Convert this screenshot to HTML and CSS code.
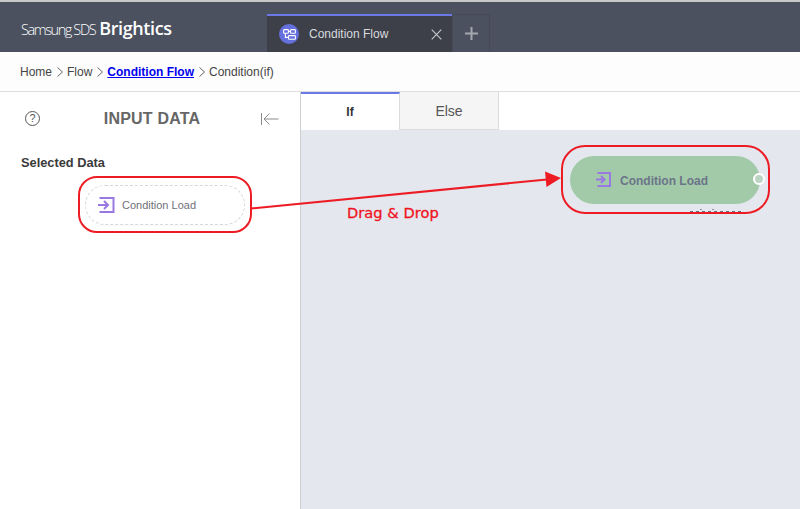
FILE: index.html
```html
<!DOCTYPE html>
<html lang="en">
<head>
<meta charset="utf-8">
<title>Condition Flow</title>
<link rel="stylesheet" href="styles.css">
</head>
<body>
<div class="page">
  <header class="topbar">
    <div class="logo"><span class="logo-sds">Samsung SDS</span><span class="logo-name">Brightics</span></div>
    <div class="tabs">
      <div class="tab">
        <span class="tab-icon">
          <svg width="13" height="11" viewBox="0 0 13 11" fill="none" stroke="#fff" stroke-width="1.1"><rect x=".6" y=".6" width="4.800" height="3.600" rx=".7"/><rect x="7.500" y=".6" width="4.900" height="3.600" rx=".7"/><rect x="5.500" y="6.600" width="6.900" height="3.600" rx=".7"/><path d="M5.400 2.400H7.500M2.400 4.200V8.400H5.500"/></svg>
        </span>
        <span class="tab-title">Condition Flow</span>
        <svg class="tab-close" width="11" height="11" viewBox="0 0 11 11" stroke="#c3c5ca" stroke-width="1.2"><path d="M.7.7 10.300 10.300M10.300.7.7 10.300"/></svg>
      </div>
      <div class="tab-add">
        <svg width="13" height="13" viewBox="0 0 13 13" stroke="#a5a8b0" stroke-width="2"><path d="M6.500 0V13M0 6.500H13"/></svg>
      </div>
    </div>
  </header>
  <nav class="crumbs">
    <span>Home</span>
    <svg class="chev" width="6" height="10" viewBox="0 0 6 10" fill="none" stroke="#666"><path d="M.5.5 5.500 5 .5 9.500"/></svg>
    <span>Flow</span>
    <svg class="chev" width="6" height="10" viewBox="0 0 6 10" fill="none" stroke="#666"><path d="M.5.5 5.500 5 .5 9.500"/></svg>
    <a class="crumb-link" href="#">Condition Flow</a>
    <svg class="chev" width="6" height="10" viewBox="0 0 6 10" fill="none" stroke="#666"><path d="M.5.5 5.500 5 .5 9.500"/></svg>
    <span>Condition(if)</span>
  </nav>
  <main class="body">
    <aside class="side">
      <div class="side-head">
        <span class="help">?</span>
        <h2 class="side-title">INPUT DATA</h2>
        <svg class="collapse" width="18" height="12" viewBox="0 0 18 12" fill="none" stroke="#8a8a8a"><path d="M.5 0V12M17.500 6H3M8.500.5 3 6l5.500 5.500"/></svg>
      </div>
      <h3 class="side-label">Selected Data</h3>
      <div class="data-row">
        <div class="data-pill">
          <svg width="17" height="16" viewBox="0 0 17 16" fill="none" stroke="#9a78e2" stroke-width="2"><path d="M1.500 1H15.500V15H1.500M0 8H10M6 4 10 8 6 12"/></svg>
          <span class="data-text">Condition Load</span>
        </div>
      </div>
    </aside>
    <section class="work">
      <div class="work-tabs">
        <div class="work-tab active">If</div>
        <div class="work-tab">Else</div>
      </div>
      <div class="canvas"></div>
    </section>
  </main>

  <div class="node">
    <svg class="node-icon" width="15" height="15" viewBox="0 0 15 15" fill="none" stroke="#9a78e2" stroke-width="2"><path d="M1.500 1H14V14H1.500M0 7.500H8.500M5 4 8.500 7.500 5 11"/></svg>
    <span class="node-text">Condition Load</span>
    <span class="node-port"></span>
  </div>
  <div class="node-dots"></div>
  <div class="mark mark-left"></div>
  <div class="mark mark-right"></div>
  <svg class="arrow" width="800" height="509" viewBox="0 0 800 509"><path d="M251 208.500 547 179.500" fill="none" stroke="#ed1c24" stroke-width="2"/><path d="M561 178 545 171.500 546.500 187z" fill="#ed1c24"/></svg>
  <div class="drag">Drag &amp; Drop</div>
</div>
</body>
</html>
```

FILE: styles.css
```css
* { box-sizing: border-box; }
html, body { margin: 0; padding: 0; }
body { font-family: "Liberation Sans", Arial, sans-serif; background: #fff; overflow: hidden; }
.page { position: relative; width: 800px; height: 509px; overflow: hidden; display: flex; flex-direction: column; }

.topbar { height: 52px; flex: none; background: #4b515f; border-top: 2px solid #c8c8c8; display: flex; align-items: flex-end; }
.logo { width: 267px; height: 50px; padding: 15px 0 0 21px; color: #fff; display: flex; align-items: baseline; white-space: nowrap; }
.logo-sds { font-family: "Open Sans", sans-serif; font-weight: 300; font-size: 14.500px; letter-spacing: -1.400px; line-height: 22px; }
.logo-name { font-family: "Open Sans", sans-serif; font-weight: 600; font-size: 18px; letter-spacing: -0.400px; margin-left: 4px; line-height: 22px; }
.tabs { display: flex; height: 38px; }
.tab { width: 185px; background: #3d4049; border-top: 2px solid #6b78e6; display: flex; align-items: center; padding: 0 10px 0 12px; }
.tab-icon { width: 20px; height: 20px; border-radius: 50%; background: #6570dc; display: flex; align-items: center; justify-content: center; }
.tab-title { margin-left: 10px; flex: 1; font-size: 12px; color: #d8dade; }
.tab-add { width: 38px; border: 1px solid #454a56; border-bottom: 0; display: flex; align-items: center; justify-content: center; }

.crumbs { height: 40px; flex: none; border-bottom: 1px solid #dedede; background: #fdfdfd; padding: 0 0 0 20px; display: flex; align-items: center; font-size: 12px; color: #444; }
.chev { margin: 0 4.500px; flex: none; }
.crumb-link { color: #0000ee; font-weight: 700; }

.body { flex: 1; display: flex; min-height: 0; }
.side { width: 301px; flex: none; border-right: 1px solid #cfcfcf; background: #fff; }
.side-head { height: 53px; display: flex; align-items: center; padding: 0 21px 0 25px; }
.help { width: 15px; height: 15px; border: 1px solid #555; border-radius: 50%; font-size: 11px; line-height: 13px; text-align: center; color: #555; flex: none; }
.side-title { flex: 1; margin: 0; text-align: center; font-size: 16px; font-weight: 700; color: #666; padding-left: 3px; letter-spacing: 0.200px; }
.collapse { flex: none; }
.side-label { margin: 9px 0 0 21px; font-size: 12.800px; font-weight: 700; color: #3a3a3a; line-height: 18px; }
.data-row { padding: 13px 0 0 85px; }
.data-pill { width: 160px; height: 40px; border: 1px dashed #d8d8d8; border-radius: 20px; display: flex; align-items: center; padding-left: 12px; }
.data-text { margin-left: 7px; font-size: 11px; color: #6f6f78; }

.work { flex: 1; display: flex; flex-direction: column; min-width: 0; }
.work-tabs { height: 38px; display: flex; flex: none; background: #fff; }
.work-tab { width: 99px; display: flex; align-items: center; justify-content: center; font-size: 14px; color: #555; background: #f5f5f5; border-right: 1px solid #dcdcdc; border-bottom: 1px solid #dcdcdc; }
.work-tab.active { background: #fff; border-top: 2px solid #6b78e6; border-bottom: 0; font-weight: 700; color: #333; font-size: 12px; }
.canvas { flex: 1; background: #e4e7ee; }

.node { position: absolute; left: 570px; top: 156px; width: 190px; height: 48px; border-radius: 24px; background: #a2caa8; display: flex; align-items: center; padding-left: 26px; }
.node-icon { margin-bottom: 2px; }
.node-text { margin: 2px 0 0 9px; font-size: 12px; font-weight: 700; color: #6c7488; }
.node-port { position: absolute; right: -5px; top: 17px; width: 12px; height: 12px; border-radius: 50%; border: 2.500px solid #fff; background: #bcd4c4; }
.node-dots { position: absolute; left: 690px; top: 211px; width: 53px; height: 1px; background: repeating-linear-gradient(90deg, #66707f 0 3px, transparent 3px 6px); }
.node-dots::before { content: ""; position: absolute; left: 10px; top: -2px; width: 2px; height: 1px; background: #8d9a9a; box-shadow: 12px 0 #8d9a9a; }

.mark { position: absolute; border: 2px solid #ed1c24; }
.mark-left { left: 78px; top: 176px; width: 174px; height: 57px; border-radius: 19px; }
.mark-right { left: 561px; top: 145px; width: 209px; height: 69px; border-radius: 24px; }
.arrow { position: absolute; left: 0; top: 0; }
.drag { position: absolute; left: 347px; top: 204px; font-family: "DejaVu Sans", sans-serif; font-size: 14.600px; letter-spacing: 0.050px; color: #f0121c; -webkit-text-stroke: 0.300px #f0121c; line-height: 18px; }
```
